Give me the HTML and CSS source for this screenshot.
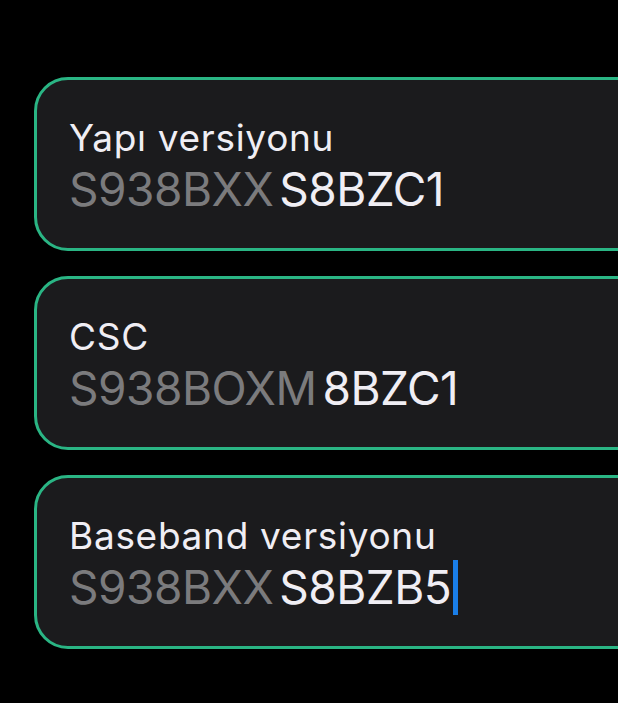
FILE: index.html
```html
<!DOCTYPE html>
<html>
	<head>
		<link rel="stylesheet" href="styles.css">
		<title>Yazılım bilgileri</title>
	</head>
	<body>
		<div class="list">
			<div class="card">
				<div class="label">Yapı versiyonu</div>
				<div class="value"><span class="dim">S938BXX</span>S8BZC1</div>
			</div>
			<div class="card">
				<div class="label">CSC</div>
				<div class="value"><span class="dim">S938BOXM</span>8BZC1</div>
			</div>
			<div class="card">
				<div class="label">Baseband versiyonu</div>
				<div class="value"><span class="dim">S938BXX</span>S8BZB5<span class="cursor"></span></div>
			</div>
		</div>
	</body>
</html>
```

FILE: styles.css
```css
html, body {
	margin: 0;
	background: #000000;
	overflow: hidden;
}
body {
	width: 618px;
	height: 703px;
	font-family: "Inter", "Noto Sans", sans-serif;
}
.list {
	display: flex;
	flex-direction: column;
	gap: 25px;
	padding-top: 77px;
	padding-left: 34px;
}
.card {
	width: 640px;
	height: 174px;
	box-sizing: border-box;
	background: #1b1b1d;
	border: 3px solid #2ab584;
	border-radius: 34px;
	padding: 35px 0 0 32px;
}
.label {
	font-size: 37px;
	line-height: 46px;
	color: #f0eef4;
	letter-spacing: 0.7px;
}
.value {
	font-size: 46px;
	line-height: 56px;
	color: #f0eef4;
	letter-spacing: -0.5px;
	display: flex;
	align-items: center;
}
.dim {
	color: #7b7b7d;
	margin-right: 6px;
}
.cursor {
	display: inline-block;
	width: 5px;
	height: 55px;
	background: #1a7ee8;
	margin-left: 2px;
}
```
